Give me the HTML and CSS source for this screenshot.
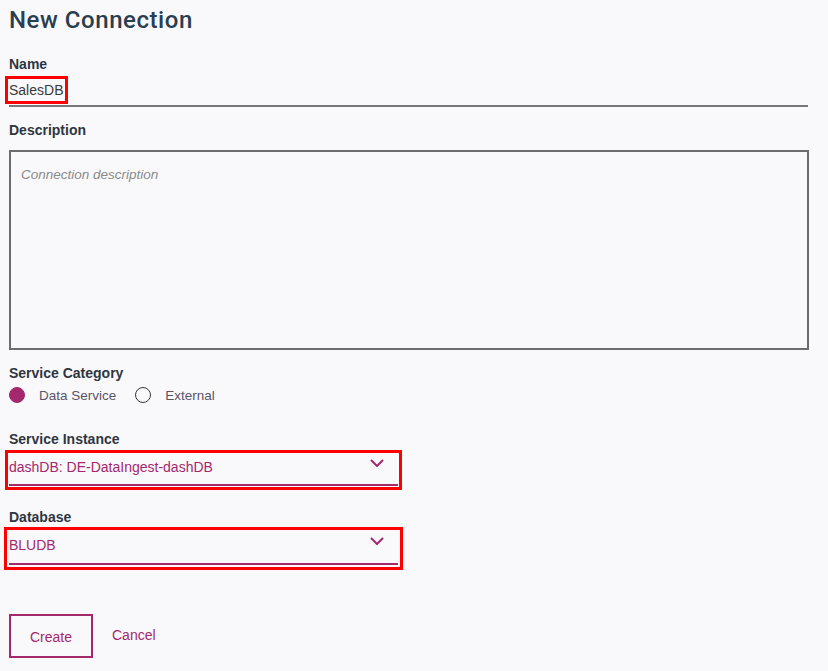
FILE: index.html
```html
<!DOCTYPE html>
<html lang="en">
<head>
<meta charset="utf-8">
<title>New Connection</title>
<link rel="stylesheet" href="styles.css">
</head>
<body>
<main class="page">
  <h1 class="title">New Connection</h1>

  <div class="field field-name">
    <label class="label">Name</label>
    <div class="text-input"><span class="mark">SalesDB</span></div>
  </div>

  <div class="field field-desc">
    <label class="label">Description</label>
    <div class="textarea"><span class="placeholder">Connection description</span></div>
  </div>

  <div class="field field-cat">
    <label class="label">Service Category</label>
    <div class="radios">
      <span class="radio"><span class="dot checked"></span><span class="radio-text">Data Service</span></span>
      <span class="radio"><span class="dot"></span><span class="radio-text">External</span></span>
    </div>
  </div>

  <div class="field field-inst">
    <label class="label">Service Instance</label>
    <div class="select hl">
      <span class="select-value">dashDB: DE-DataIngest-dashDB</span>
      <svg class="chev" width="14" height="8" viewBox="0 0 14 8"><path d="M1 1 L7 7 L13 1" fill="none" stroke="#a3286c" stroke-width="2"/></svg>
    </div>
  </div>

  <div class="field field-db">
    <label class="label">Database</label>
    <div class="select hl tall">
      <span class="select-value">BLUDB</span>
      <svg class="chev" width="14" height="8" viewBox="0 0 14 8"><path d="M1 1 L7 7 L13 1" fill="none" stroke="#a3286c" stroke-width="2"/></svg>
    </div>
  </div>

  <div class="actions">
    <button class="btn-create">Create</button>
    <span class="btn-cancel">Cancel</span>
  </div>
</main>
</body>
</html>
```

FILE: styles.css
```css
html, body {
  margin: 0;
  padding: 0;
  background: #f9f9fb;
}
body {
  font-family: "Liberation Sans", Arial, sans-serif;
  color: #323232;
}
.page {
  padding: 0 19px 0 9px;
  width: 800px;
}
.title {
  margin: 0;
  padding-top: 5px;
  font-family: Roboto, "Liberation Sans", sans-serif;
  font-weight: 500;
  font-size: 24px;
  line-height: 30px;
  letter-spacing: 0.55px;
  color: #2b3e50;
}
.label {
  display: block;
  font-weight: bold;
  font-size: 14px;
  line-height: 16px;
  color: #2f3640;
}
.field-name { margin-top: 21px; }
.text-input {
  width: 799px;
  height: 35px;
  border-bottom: 2px solid #777;
  box-sizing: border-box;
  display: flex;
  align-items: center;
  padding-top: 6px;
  padding-bottom: 4px;
  font-size: 14px;
  color: #3a3a3a;
}
.mark {
  display: inline-block;
  line-height: 20px;
  padding: 0 1px 0 0;
  outline: 3px solid #f00;
  outline-offset: 1px;
}
.field-desc { margin-top: 15px; }
.textarea {
  margin-top: 12px;
  width: 800px;
  height: 200px;
  box-sizing: border-box;
  border: 2px solid #6d6d6d;
  padding: 13px 10px;
}
.placeholder {
  font-style: italic;
  font-size: 13.5px;
  color: #8a8a8a;
}
.field-cat { margin-top: 15px; }
.radios {
  display: flex;
  align-items: center;
  margin-top: 6px;
  height: 16px;
}
.radio {
  display: flex;
  align-items: center;
  margin-right: 19px;
}
.dot {
  width: 16px;
  height: 16px;
  box-sizing: border-box;
  border-radius: 50%;
  border: 1.5px solid #3a3a3a;
}
.dot.checked {
  background: #a3286c;
  border-color: #a3286c;
}
.radio-text {
  margin-left: 14px;
  font-size: 13.5px;
  color: #5b5466;
}
.field-inst { margin-top: 28px; }
.select {
  position: relative;
  width: 389px;
  height: 32px;
  box-sizing: border-box;
  border-bottom: 2px solid #a3286c;
  display: flex;
  align-items: center;
  justify-content: space-between;
  margin-top: 7px;
  padding-bottom: 5px;
}
.select.tall { height: 33px; margin-top: 7px; }
.hl {
  outline: 3px solid #f00;
  outline-offset: 1px;
}
.hl.tall { outline-offset: 2px; }
.select-value {
  font-size: 14px;
  color: #a3286c;
}
.chev {
  margin-right: 14px;
  margin-top: -8px;
}
.field-db { margin-top: 23px; }
.actions {
  margin-top: 49px;
  display: flex;
  align-items: center;
}
.btn-create {
  width: 84px;
  height: 44px;
  background: transparent;
  border: 2px solid #a3286c;
  color: #a3286c;
  font-family: "Liberation Sans", Arial, sans-serif;
  font-size: 14px;
  padding: 0;
  padding-top: 2px;
}
.btn-cancel {
  margin-left: 19px;
  font-size: 14px;
  color: #a3286c;
  margin-top: -2px;
}
```
